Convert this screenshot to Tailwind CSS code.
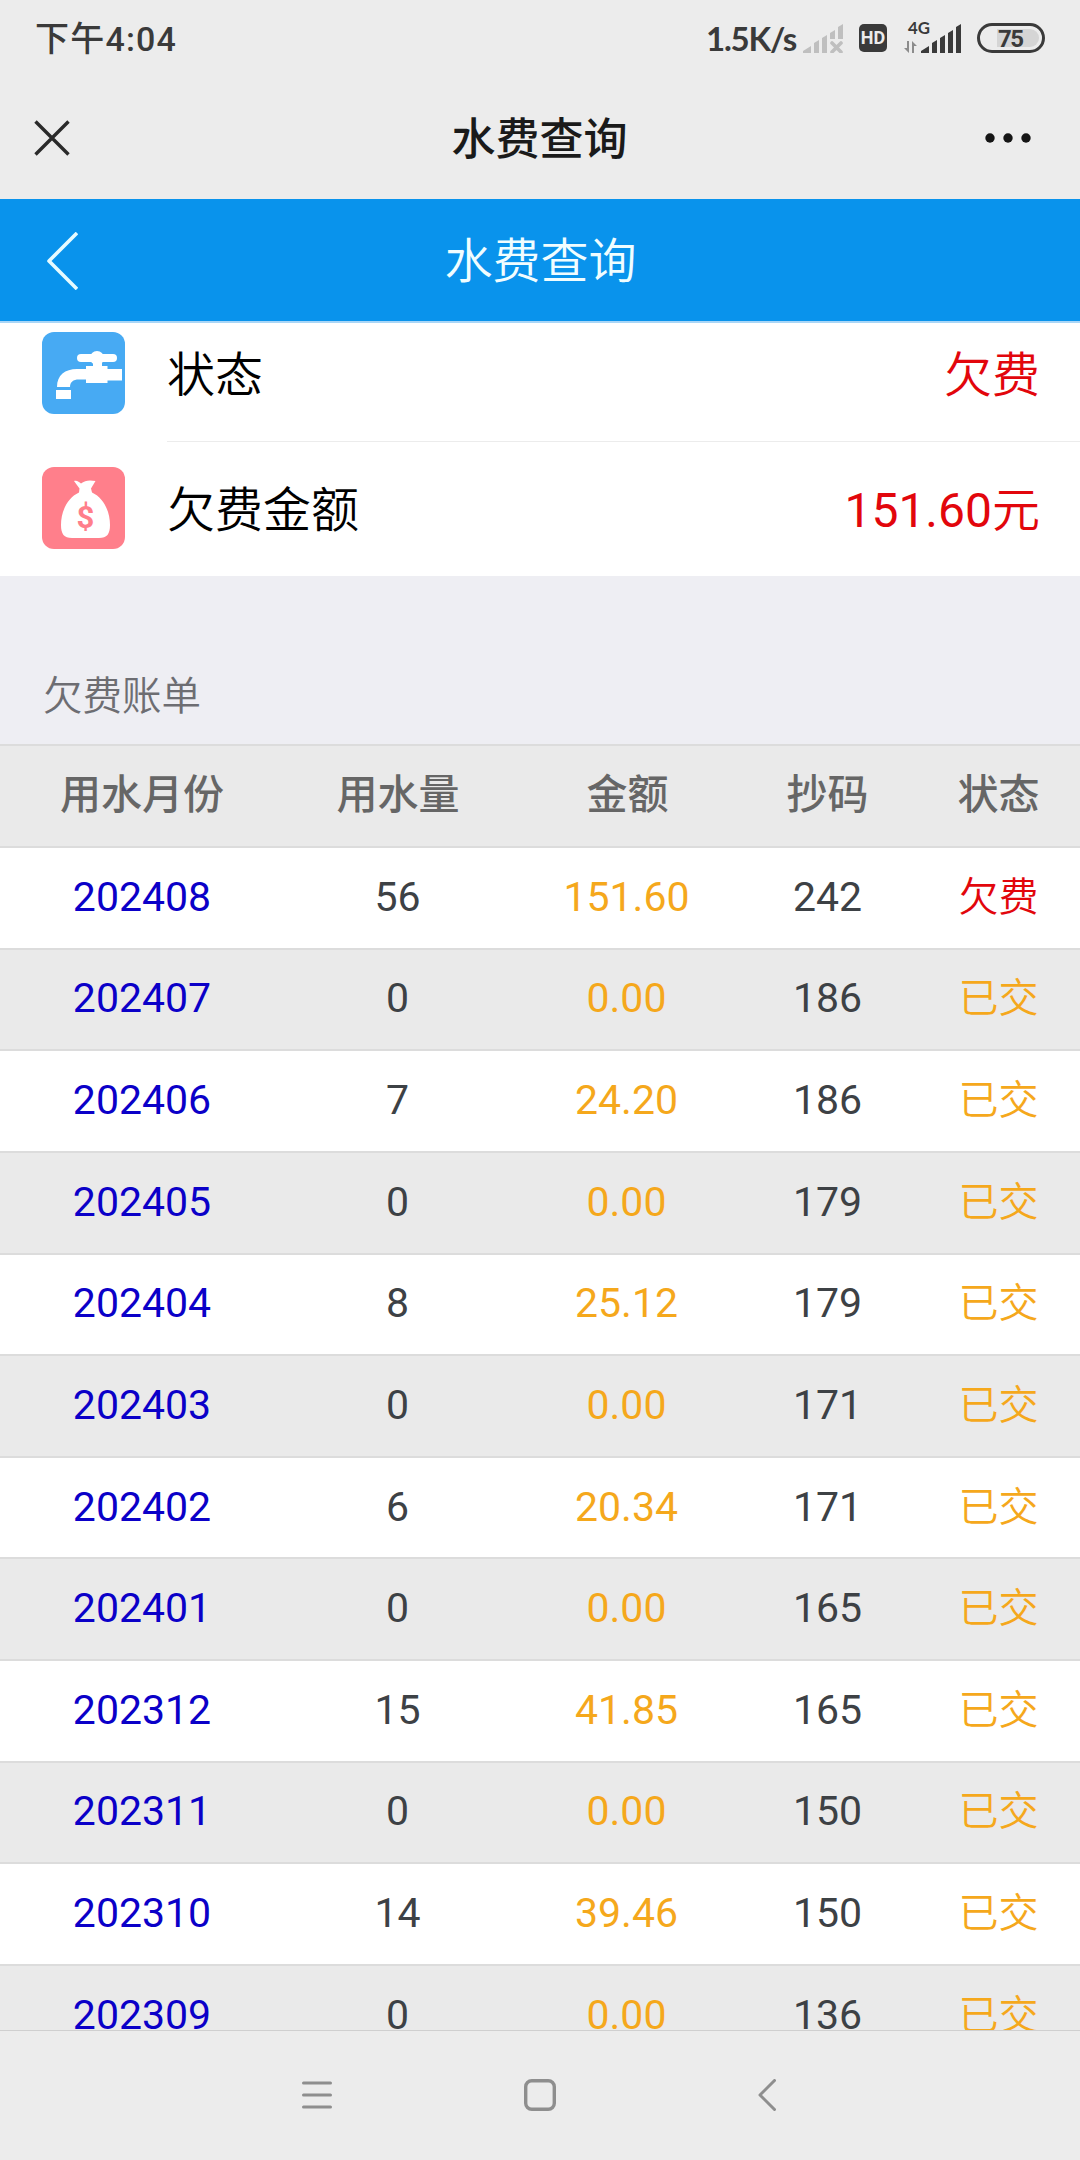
<!DOCTYPE html>
<html lang="zh-CN">
<head>
    <meta charset="UTF-8">
    <meta name="viewport" content="width=device-width, initial-scale=1.0">
    <title>水费查询</title>
    <script src="https://cdn.jsdelivr.net/npm/@tailwindcss/browser@4"></script>
</head>
<body class="w-[1080px] h-[2160px] overflow-hidden flex flex-col bg-[#ececec] font-[Roboto,'Noto_Sans_CJK_SC',sans-serif]">
    <!-- Status bar -->
    <div class="h-[76px] shrink-0 flex items-center justify-between pl-[35px] pr-[35px] text-[#3a3a3a]">
        <span class="text-[34px] leading-10 font-medium tracking-[1.2px] whitespace-nowrap pt-0.5">下午4:04</span>
        <div class="flex items-center">
            <span class="text-[33px] leading-10 font-bold font-[Lato,sans-serif] tracking-[-1.2px] w-[97px] whitespace-nowrap">1.5K/s</span>
            <svg class="w-10 h-[29px]" viewBox="0 0 40 29" fill="#bfbfbf">
                <path d="M0 29v-2l8-5v7zM11 29V19l5-3v13zM19 29V14l5-3v18zM27 15V9l5-3v9zM35 15V3l5-3v15z"/>
                <path d="M29 19l9 9M38 19l-9 9" stroke="#bfbfbf" stroke-width="3.6" stroke-linecap="round"/>
            </svg>
            <div class="ml-4 w-7 h-7 rounded-[5px] bg-[#3a3a3a] text-[#ececec] text-[18px] font-bold flex items-center justify-center leading-6">HD</div>
            <svg class="ml-[17px] w-[57px] h-8 -mt-[3px] overflow-visible" viewBox="0 0 57 32" fill="#3a3a3a">
                <text x="4" y="13" font-size="17" font-weight="700" font-family="Lato" textLength="22" lengthAdjust="spacingAndGlyphs">4G</text>
                <path d="M17 32v-2l8-5v7zM28 32V22l5-3v13zM36 32V17l5-3v18zM44 32V12l5-3v23zM52 32V6l5-3v29z"/>
                <path d="M5 20v12l-5-5h3v-7zM8 32V20l5 5h-3v7z" fill="#8c8c8c"/>
            </svg>
            <div class="ml-4 w-[68px] h-[30px] rounded-full border-[3px] border-[#3a3a3a] relative">
                <div class="absolute left-[17px] top-[3px] w-[42px] h-[18px] rounded-r-full bg-[#d5d5d5]"></div>
                <span class="absolute left-[18px] top-px text-[24px] leading-6 font-bold tracking-[-1.5px]">75</span>
            </div>
        </div>
    </div>

    <!-- WebView title bar -->
    <div class="h-[123px] shrink-0 grid grid-cols-3 items-center pl-[34px] pr-[48px]">
        <svg class="w-9 h-9" viewBox="0 0 36 36" fill="none" stroke="#2a2a2a" stroke-width="3.4">
            <path d="M1.500 1.500L34.500 34.500M34.500 1.500L1.500 34.500"/>
        </svg>
        <h1 class="text-[44px] leading-14 font-medium text-[#1a1a1a] text-center whitespace-nowrap pl-[13px] pt-1">水费查询</h1>
        <svg class="w-[48px] h-3 justify-self-end" viewBox="0 0 48 12" fill="#151515">
            <circle cx="6" cy="6" r="4.700"/><circle cx="24" cy="6" r="4.700"/><circle cx="42" cy="6" r="4.700"/>
        </svg>
    </div>

    <!-- Page header -->
    <header class="h-[124px] shrink-0 bg-[#0993ec] border-b-2 border-[#a9d6f7] grid grid-cols-3 items-center px-[46px]">
        <svg class="w-8 h-[58px] mt-0.5" viewBox="0 0 32 58" fill="none" stroke="#e6fbff" stroke-width="3.600" stroke-linejoin="round">
            <path d="M31 1L3 29L31 57"/>
        </svg>
        <h2 class="text-[48px] leading-14 text-[#f0fdff] font-[350] text-center whitespace-nowrap pt-1 pl-px">水费查询</h2>
    </header>

    <!-- Account summary -->
    <section class="h-[253px] shrink-0 bg-white overflow-hidden flex flex-col justify-end text-[48px] leading-14">
        <div class="h-[135px] shrink-0 flex items-center pl-[42px]">
            <svg class="w-[83px] h-[82px] shrink-0 -mt-1" viewBox="0 0 83 82">
                <rect width="83" height="82" rx="12" fill="#47aaf3"/>
                <g fill="#fff">
                    <rect x="35" y="22" width="40" height="8" rx="4"/>
                    <circle cx="55" cy="26" r="7"/>
                    <path d="M51 31h9v3h5.500v3H80v11.500H65.500V51H44v-3.500h-7C31 47.500 28 50 28 55H15C15 43 23 37 35 37h9v-3h7z"/>
                    <rect x="14" y="58" width="15" height="9"/>
                </g>
            </svg>
            <div class="ml-[42px] h-full flex-1 flex items-center justify-between border-b border-[#ececec] pr-10 pt-1">
                <span class="text-black font-[350]">状态</span>
                <span class="text-[#e2060c] font-[350]">欠费</span>
            </div>
        </div>
        <div class="h-[134px] shrink-0 flex items-center pl-[42px]">
            <svg class="w-[83px] h-[82px] shrink-0 -mt-0.5" viewBox="0 0 83 82">
                <rect width="83" height="82" rx="12" fill="#ff7f8b"/>
                <path d="M32 14c3-1 5 1 7 2.500C43 13 48 13 53.500 14L49 21.500l1 4C62 31 68 45 68 58c0 9-3 13-11 13H30c-8 0-11-4-11-13 0-13 6-27 18-32.500l.5-4z" fill="#fff"/>
                <text x="43.500" y="60.500" font-size="31" font-weight="700" text-anchor="middle" fill="#ff7f8b" font-family="Roboto">$</text>
            </svg>
            <div class="ml-[42px] h-full flex-1 flex items-center justify-between pr-10 pt-1">
                <span class="text-black font-[350]">欠费金额</span>
                <span class="text-[#e2060c]">151.60<span class="font-[350]">元</span></span>
            </div>
        </div>
    </section>

    <h3 class="h-[168px] shrink-0 bg-[#eeeef3] pl-[43px] pt-[95px] text-[39.5px] leading-[52px] text-[#6d6d72] font-[350]">欠费账单</h3>

    <!-- Bills -->
    <main class="h-[1286px] shrink-0 overflow-hidden text-[41px] leading-[52px]">
        <div class="h-[102px] grid grid-cols-[284px_228px_231px_169px_173px] items-center text-center bg-[#eaeaea] border-t-2 border-[#dcdcdc] text-[#666] font-medium pb-0.5">
            <span>用水月份</span>
            <span>用水量</span>
            <span>金额</span>
            <span>抄码</span>
            <span>状态</span>
        </div>
        <div id="bills"></div>
    </main>

    <!-- System navigation -->
    <nav class="h-[130px] shrink-0 border-t border-[#cfcfcf] flex items-center pl-[302px] pb-0.5">
        <svg class="w-[30px] h-7" viewBox="0 0 30 28" fill="none" stroke="#8e8e8e" stroke-width="3" stroke-linecap="round">
            <path d="M1.500 2h27M1.500 14h27M1.500 26h27"/>
        </svg>
        <svg class="ml-48 w-8 h-8" viewBox="0 0 32 32" fill="none" stroke="#8e8e8e" stroke-width="3.400">
            <rect x="1.700" y="1.700" width="28.600" height="28.600" rx="6"/>
        </svg>
        <svg class="ml-[202px] w-[18px] h-8" viewBox="0 0 18 32" fill="none" stroke="#8e8e8e" stroke-width="3" stroke-linecap="round" stroke-linejoin="round">
            <path d="M16.500 1.500L2 16L16.500 30.500"/>
        </svg>
    </nav>

    <script>
        // month, usage, amount, meter reading, status
        const bills = [
            ['202408', '56', '151.60', '242', '欠费'],
            ['202407', '0', '0.00', '186', '已交'],
            ['202406', '7', '24.20', '186', '已交'],
            ['202405', '0', '0.00', '179', '已交'],
            ['202404', '8', '25.12', '179', '已交'],
            ['202403', '0', '0.00', '171', '已交'],
            ['202402', '6', '20.34', '171', '已交'],
            ['202401', '0', '0.00', '165', '已交'],
            ['202312', '15', '41.85', '165', '已交'],
            ['202311', '0', '0.00', '150', '已交'],
            ['202310', '14', '39.46', '150', '已交'],
            ['202309', '0', '0.00', '136', '已交'],
        ];

        document.getElementById('bills').innerHTML = bills.map(([month, usage, amount, reading, status]) => `
            <div class="h-[101.64px] grid grid-cols-[284px_228px_231px_169px_173px] items-center text-center border-t-2 border-[#dcdcdc] bg-white even:bg-[#eaeaea] text-[#3d4145] pb-0.5">
                <span class="text-[#0b00c8]">${month}</span>
                <span class="pr-px">${usage}</span>
                <span class="text-[#f5a81c] pr-0.5">${amount}</span>
                <span>${reading}</span>
                <span class="text-[40px] font-[350] pt-0.5 ${status === '欠费' ? 'text-[#e2060c]' : 'text-[#f5a81c]'}">${status}</span>
            </div>
        `).join('');
    </script>
</body>
</html>
